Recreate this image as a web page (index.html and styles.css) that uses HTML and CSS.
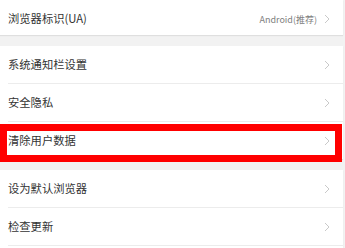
FILE: index.html
```html
<!DOCTYPE html>
<html lang="zh-CN">
<head>
<meta charset="utf-8">
<title>设置</title>
<link rel="stylesheet" href="styles.css">
</head>
<body>
<div class="page">
  <section class="card">
    <div class="row row-first">
      <span class="label">浏览器标识(UA)</span>
      <span class="value">Android(推荐)</span>
      <svg class="chev" viewBox="0 0 6 10" width="6" height="10"><polyline points="1,1 5,5 1,9"/></svg>
    </div>
  </section>
  <section class="card">
    <div class="row">
      <span class="label">系统通知栏设置</span>
      <svg class="chev" viewBox="0 0 6 10" width="6" height="10"><polyline points="1,1 5,5 1,9"/></svg>
    </div>
    <div class="row">
      <span class="label">安全隐私</span>
      <svg class="chev" viewBox="0 0 6 10" width="6" height="10"><polyline points="1,1 5,5 1,9"/></svg>
    </div>
    <div class="row row-marked">
      <span class="label">清除用户数据</span>
      <svg class="chev" viewBox="0 0 6 10" width="6" height="10"><polyline points="1,1 5,5 1,9"/></svg>
      <div class="highlight"></div>
    </div>
  </section>
  <section class="card card-open">
    <div class="row">
      <span class="label">设为默认浏览器</span>
      <svg class="chev" viewBox="0 0 6 10" width="6" height="10"><polyline points="1,1 5,5 1,9"/></svg>
    </div>
    <div class="row">
      <span class="label">检查更新</span>
      <svg class="chev" viewBox="0 0 6 10" width="6" height="10"><polyline points="1,1 5,5 1,9"/></svg>
    </div>
  </section>
</div>
</body>
</html>
```

FILE: styles.css
```css
html, body {
  margin: 0;
  padding: 0;
  background: #f2f2f2;
  overflow: hidden;
}
body {
  font-family: "Noto Sans CJK SC", "Noto Sans", sans-serif;
  color: #333;
}
.page {
  display: flex;
  flex-direction: column;
  gap: 11px;
  width: 343px;
}
.card {
  background: #fff;
  box-shadow: 0 1px 1px rgba(0, 0, 0, 0.08);
}
.card-open {
  padding-bottom: 10px;
}
.row {
  position: relative;
  display: flex;
  align-items: center;
  height: 37px;
  margin-left: 8px;
  padding-right: 13px;
  border-bottom: 1px solid #ececec;
}
.card .row:last-child {
  border-bottom: none;
}
.card-open .row:last-child {
  border-bottom: 1px solid #ececec;
}
.row-first {
  height: 32px;
  padding-top: 3px;
}
.label {
  flex: 1;
  font-size: 11.3px;
  line-height: 1;
  color: #333;
}
.value {
  font-size: 9px;
  color: #808080;
  margin-right: 7px;
}
.chev {
  display: block;
  fill: none;
  stroke: #c9c9c9;
  stroke-width: 1;
}
.highlight {
  position: absolute;
  top: 2px;
  left: -8px;
  right: 1px;
  height: 38px;
  box-sizing: border-box;
  border: 7px solid #ff0000;
}
```
